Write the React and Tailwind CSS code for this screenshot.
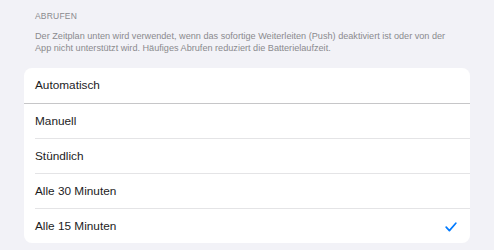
const options = ['Automatisch', 'Manuell', 'Stündlich', 'Alle 30 Minuten', 'Alle 15 Minuten'];

const App = () => {
  const selected = 'Alle 15 Minuten';

  return (
    <div className="w-[494px] h-[250px] bg-[#f2f2f7] overflow-hidden font-['Liberation_Sans',sans-serif]">
      <div className="pl-[35px] pr-[24px] pt-[11px]">
        <div className="text-[8.5px] leading-[11px] tracking-[0.2px] text-[#8a8a8e]">ABRUFEN</div>
        <p className="mt-[8px] text-[9.15px] leading-[12px] text-[#8a8a8e]">
          Der Zeitplan unten wird verwendet, wenn das sofortige Weiterleiten (Push) deaktiviert ist oder von der
          <br />
          App nicht unterstützt wird. Häufiges Abrufen reduziert die Batterielaufzeit.
        </p>
      </div>

      {/* Option list */}
      <div className="mx-[24px] mt-[14px] bg-white rounded-[8px] overflow-hidden">
        {options.map((opt, i) => (
          <div key={opt}>
            {i > 0 && (
              <div className={i === 1 ? 'h-px bg-[#c6c6c8]' : 'ml-[11px] h-px bg-[#e4e4e6]'} />
            )}
            <div className={`flex items-center justify-between pl-[11px] pr-[13px] pt-px ${i === 0 ? 'h-[35px]' : 'h-[34px]'}`}>
              <span className="text-[11.8px] text-[#1c1c1e]">{opt}</span>
              {opt === selected && (
                <svg width="12" height="10" viewBox="0 0 12 10" fill="none">
                  <path d="M1.2 5.2 L4.4 8.6 L10.8 1.2" stroke="#007aff" strokeWidth="1.7" strokeLinecap="round" strokeLinejoin="round" />
                </svg>
              )}
            </div>
          </div>
        ))}
      </div>
    </div>
  );
};

export default App;
